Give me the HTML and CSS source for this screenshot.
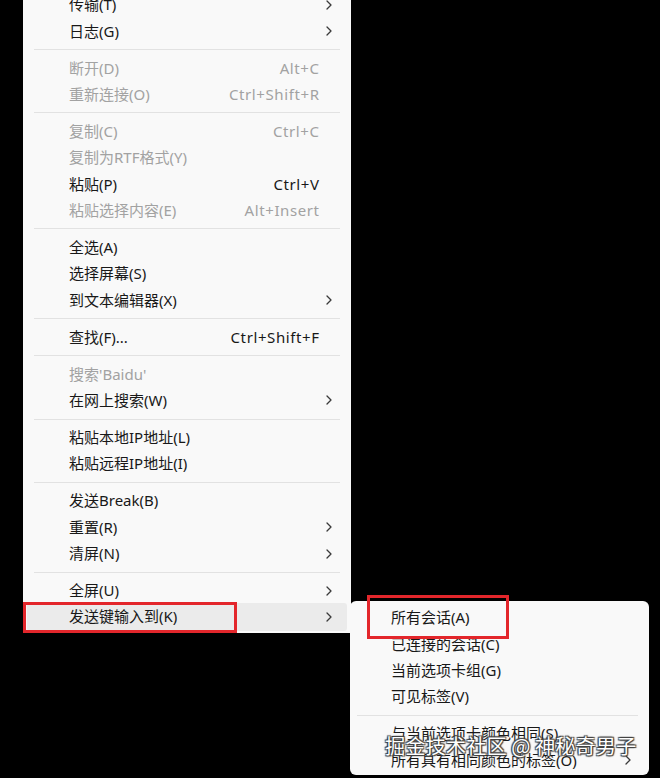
FILE: index.html
```html
<!DOCTYPE html>
<html lang="zh-CN">
<head>
<meta charset="utf-8">
<title>右键菜单</title>
<link rel="stylesheet" href="styles.css">
</head>
<body>
<div class="stage">
  <div class="menu main">
    <div class="item"><span class="label">传输(T)</span><span class="key"></span><svg class="arr" viewBox="0 0 6 10"><polyline points="1,1 5,5 1,9"/></svg></div>
    <div class="item"><span class="label">日志(G)</span><span class="key"></span><svg class="arr" viewBox="0 0 6 10"><polyline points="1,1 5,5 1,9"/></svg></div>
    <div class="sep"></div>
    <div class="item off"><span class="label">断开(D)</span><span class="key">Alt+C</span></div>
    <div class="item off"><span class="label">重新连接(O)</span><span class="key">Ctrl+Shift+R</span></div>
    <div class="sep"></div>
    <div class="item off"><span class="label">复制(C)</span><span class="key">Ctrl+C</span></div>
    <div class="item off"><span class="label">复制为RTF格式(Y)</span><span class="key"></span></div>
    <div class="item"><span class="label">粘贴(P)</span><span class="key">Ctrl+V</span></div>
    <div class="item off"><span class="label">粘贴选择内容(E)</span><span class="key">Alt+Insert</span></div>
    <div class="sep"></div>
    <div class="item"><span class="label">全选(A)</span><span class="key"></span></div>
    <div class="item"><span class="label">选择屏幕(S)</span><span class="key"></span></div>
    <div class="item"><span class="label">到文本编辑器(X)</span><span class="key"></span><svg class="arr" viewBox="0 0 6 10"><polyline points="1,1 5,5 1,9"/></svg></div>
    <div class="sep"></div>
    <div class="item"><span class="label">查找(F)...</span><span class="key">Ctrl+Shift+F</span></div>
    <div class="sep"></div>
    <div class="item off"><span class="label">搜索'Baidu'</span><span class="key"></span></div>
    <div class="item"><span class="label">在网上搜索(W)</span><span class="key"></span><svg class="arr" viewBox="0 0 6 10"><polyline points="1,1 5,5 1,9"/></svg></div>
    <div class="sep"></div>
    <div class="item"><span class="label">粘贴本地IP地址(L)</span><span class="key"></span></div>
    <div class="item"><span class="label">粘贴远程IP地址(I)</span><span class="key"></span></div>
    <div class="sep"></div>
    <div class="item"><span class="label">发送Break(B)</span><span class="key"></span></div>
    <div class="item"><span class="label">重置(R)</span><span class="key"></span><svg class="arr" viewBox="0 0 6 10"><polyline points="1,1 5,5 1,9"/></svg></div>
    <div class="item"><span class="label">清屏(N)</span><span class="key"></span><svg class="arr" viewBox="0 0 6 10"><polyline points="1,1 5,5 1,9"/></svg></div>
    <div class="sep"></div>
    <div class="item"><span class="label">全屏(U)</span><span class="key"></span><svg class="arr" viewBox="0 0 6 10"><polyline points="1,1 5,5 1,9"/></svg></div>
    <div class="item hot"><span class="label">发送键输入到(K)</span><span class="key"></span><svg class="arr" viewBox="0 0 6 10"><polyline points="1,1 5,5 1,9"/></svg></div>
  </div>

  <div class="menu sub">
    <div class="item"><span class="label">所有会话(A)</span><span class="key"></span></div>
    <div class="item"><span class="label">已连接的会话(C)</span><span class="key"></span></div>
    <div class="item"><span class="label">当前选项卡组(G)</span><span class="key"></span></div>
    <div class="item"><span class="label">可见标签(V)</span><span class="key"></span></div>
    <div class="sep"></div>
    <div class="item"><span class="label">与当前选项卡颜色相同(S)</span><span class="key"></span></div>
    <div class="item"><span class="label">所有具有相同颜色的标签(O)</span><span class="key"></span><svg class="arr" viewBox="0 0 6 10"><polyline points="1,1 5,5 1,9"/></svg></div>
  </div>

  <div class="mark mark-main"></div>
  <div class="mark mark-sub"></div>
  <div class="watermark">掘金技术社区 @ 神秘奇男子</div>
</div>
</body>
</html>
```
FILE: styles.css
```css
html, body {
  margin: 0;
  padding: 0;
}
body {
  width: 660px;
  height: 778px;
  overflow: hidden;
  background: #000;
  font-family: "Noto Sans", "Noto Sans CJK SC", sans-serif;
  font-size: 15px;
  color: #181818;
}
.stage {
  position: relative;
  margin-top: -8.45px;
  padding-left: 23px;
}
.menu {
  background: #f9f9f9;
  box-sizing: border-box;
}
.main {
  width: 328px;
  padding-bottom: 3px;
}
.item {
  height: 26.3px;
  margin: 0 4px;
  padding: 0 15px 0 42px;
  display: grid;
  grid-template-columns: 1fr auto 13px;
  align-items: center;
  border-radius: 3px;
  white-space: nowrap;
}
.item .label {
  line-height: 1;
}
.item .key {
  line-height: 1;
  text-align: right;
  letter-spacing: 0.6px;
  margin-right: -0.6px;
}
.item .arr {
  width: 6px;
  height: 10px;
  justify-self: end;
  fill: none;
  stroke: #3a3a3a;
  stroke-width: 1.3;
  stroke-linecap: round;
  stroke-linejoin: round;
}
.item.off {
  color: #a2a2a2;
}
.item.hot {
  background: #ebebeb;
  height: 28px;
  margin-top: -0.85px;
  margin-bottom: -0.85px;
}
.sep {
  height: 1px;
  background: #e2e2e2;
  margin: 4.9px 11px;
}
.sub {
  position: absolute;
  left: 350px;
  top: 609.45px;
  width: 299px;
  height: 174px;
  border-radius: 6px;
  padding-top: 3.85px;
}
.sub .item {
  padding: 0 14px 0 37px;
}
.sub .sep {
  margin: 4.9px 11px 4.9px 7px;
}
.mark {
  position: absolute;
  border: 3px solid #e3262b;
  box-sizing: border-box;
}
.mark-main {
  left: 23px;
  top: 610.45px;
  width: 214px;
  height: 31px;
}
.mark-sub {
  left: 367px;
  top: 603.45px;
  width: 142px;
  height: 44px;
}
.watermark {
  position: absolute;
  left: 385px;
  top: 743px;
  font-family: "Noto Sans CJK SC", sans-serif;
  font-size: 20.3px;
  line-height: 21px;
  color: #fff;
  white-space: nowrap;
  text-shadow: 0 0 1px #222, 1px 1px 1px #444, -1px -1px 1px #444, 1px -1px 1px #444, -1px 1px 1px #444;
}
```
